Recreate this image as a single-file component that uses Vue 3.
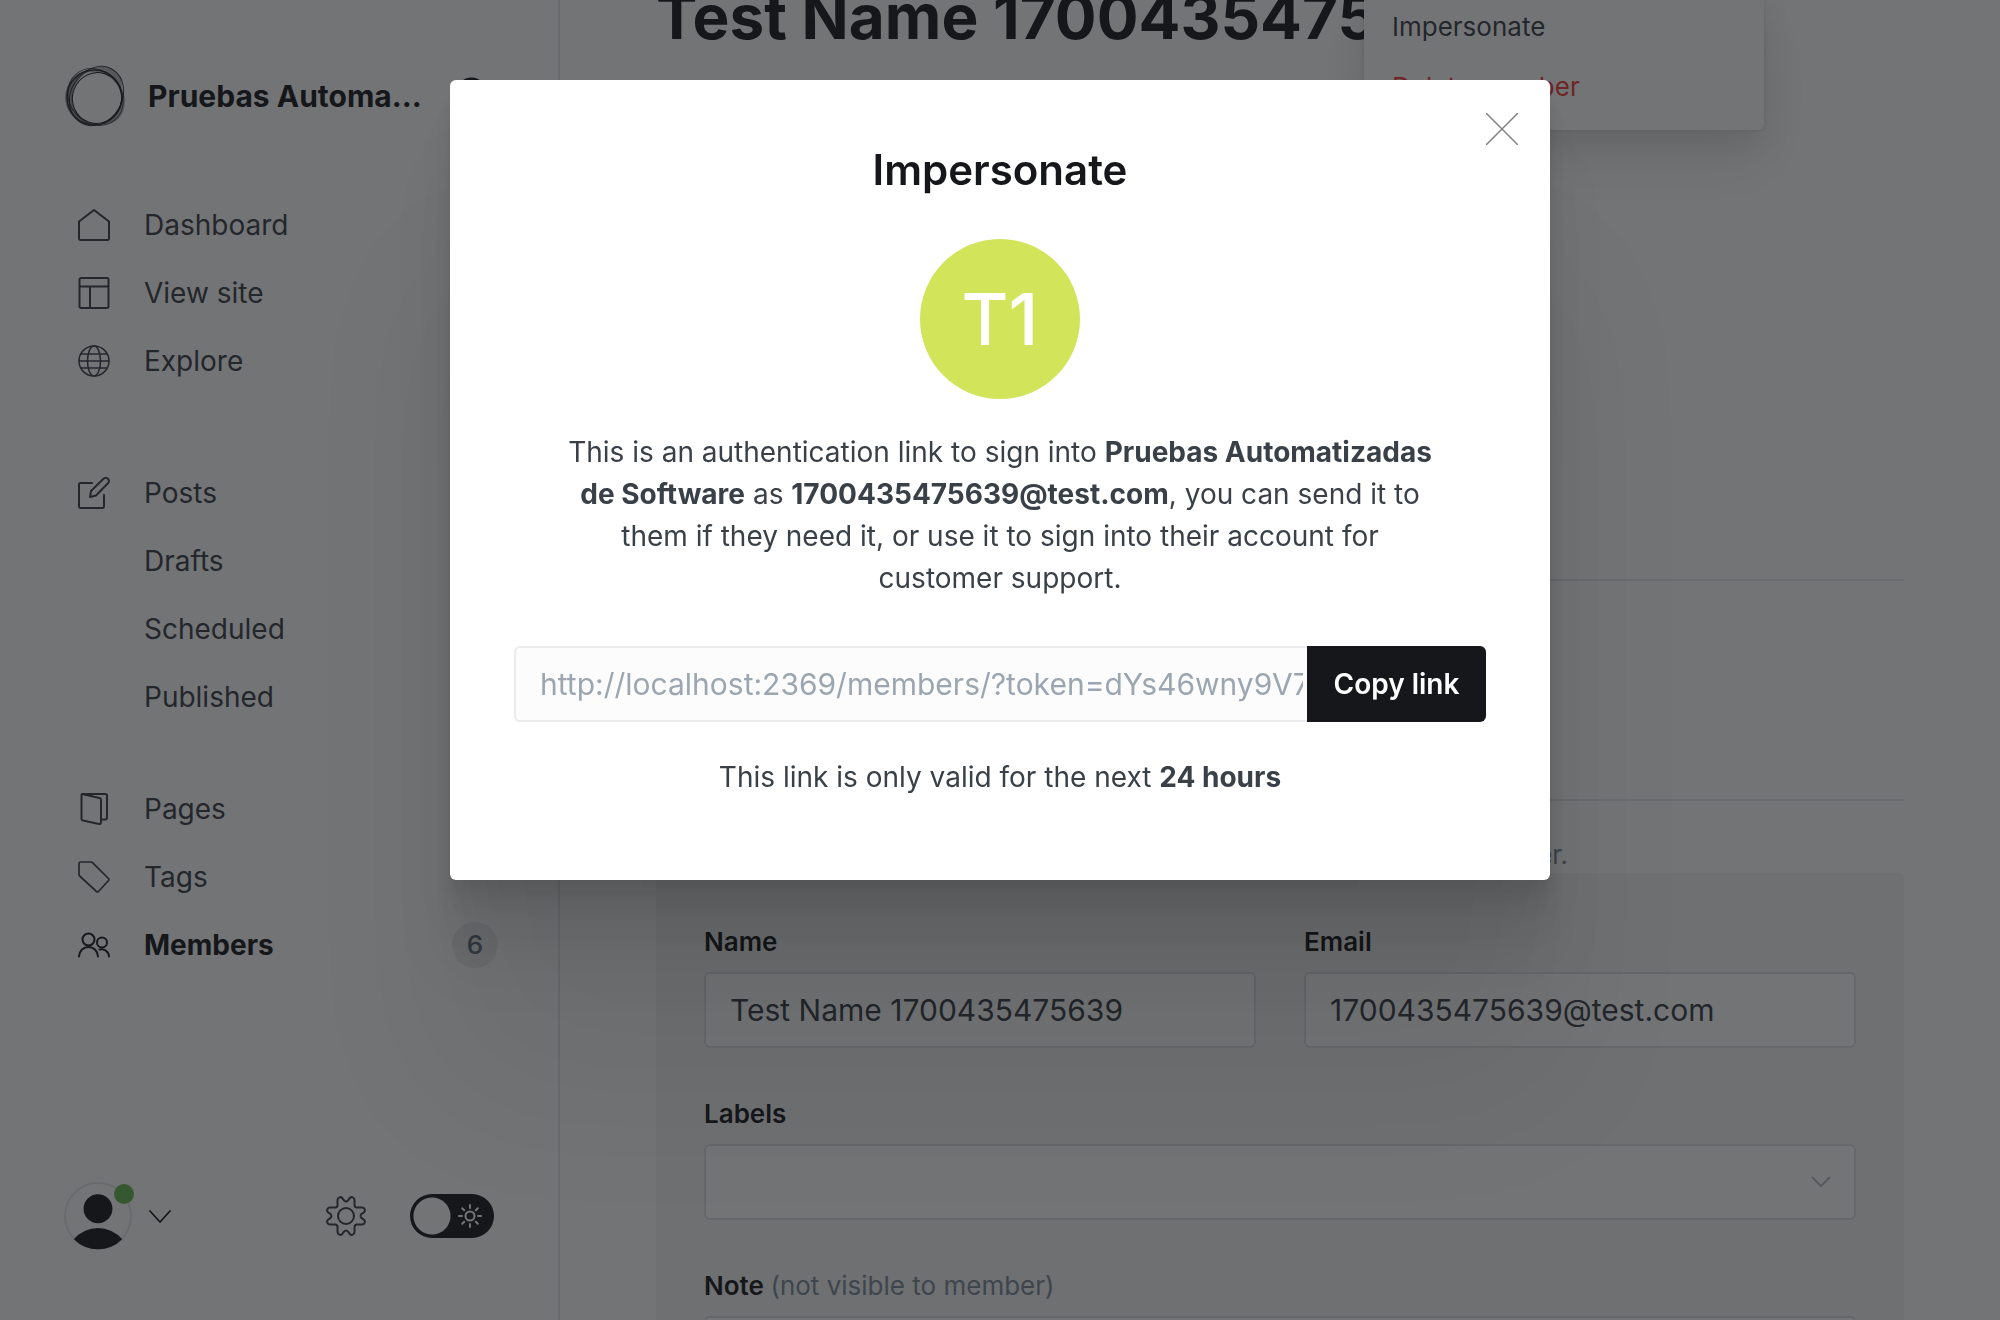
<script setup>
import { ref } from 'vue'

const groups = [
  { id: 'site-links', items: [
    { label: 'Dashboard', icon: 'house' },
    { label: 'View site', icon: 'layout' },
    { label: 'Explore', icon: 'globe' },
  ] },
  { id: 'post-links', items: [
    { label: 'Posts', icon: 'pen' },
    { label: 'Drafts' },
    { label: 'Scheduled' },
    { label: 'Published' },
  ] },
  { id: 'content-links', items: [
    { label: 'Pages', icon: 'pages' },
    { label: 'Tags', icon: 'tag' },
    { label: 'Members', icon: 'members', active: true, count: 6 },
  ] },
]

const name = ref('Test Name 1700435475639')
const email = ref('1700435475639@test.com')
const note = ref('')
const night = ref(false)
const link = 'http://localhost:2369/members/?token=dYs46wny9V7kQx2LrT5'
</script>

<template>
  <div class="page">
    <aside class="sidebar">
      <header class="site">
        <svg class="logo" viewBox="0 0 64 64" fill="none" stroke="#15171a" aria-hidden="true">
          <g fill="#15171a" stroke="none">
            <path opacity=".3" d="M20 9C30 0 46 0 55 11c5 7 2 14 2 20C54 15 38 5 20 9z" />
            <path opacity=".3" d="M58 24c5 10 4 26-6 33c-6 4-12 3-16 3c14-4 24-18 22-36z" />
            <path opacity=".45" d="M28 6C10 6-2 24 2 40c3 12 14 21 28 21C12 56 5 40 9 27C12 16 20 9 28 6z" />
          </g>
          <ellipse cx="33" cy="34" rx="24.500" ry="25.500" transform="rotate(20 33 34)" />
          <ellipse cx="30.500" cy="33.500" rx="27.500" ry="27.500" stroke-width="1.500" opacity=".8" />
          <ellipse cx="31.500" cy="33" rx="30" ry="26" transform="rotate(50 31.500 33)" opacity=".7" />
          <ellipse cx="32.500" cy="32" rx="31" ry="25.500" transform="rotate(-58 32.500 32)" opacity=".8" />
        </svg>
        <span class="site-name">Pruebas Automa...</span>
        <button class="search" type="button" aria-label="Search">
          <svg viewBox="0 0 32 32" fill="none" stroke="#15171a" stroke-width="3"><circle cx="13" cy="13" r="11" /><path d="M21 21l9 9" /></svg>
        </button>
      </header>

      <nav class="nav">
        <ul v-for="group in groups" :key="group.id" :class="['group', group.id]">
          <li v-for="item in group.items" :key="item.label">
            <a href="#" :class="['item', { active: item.active }]">
              <svg class="icon" viewBox="0 0 32 32" fill="none" stroke="currentColor" stroke-width="2" stroke-linecap="round" stroke-linejoin="round" aria-hidden="true">
                <path v-if="item.icon === 'house'" d="M1 12.500L16 1l15 11.500V29.500a1.500 1.500 0 0 1-1.500 1.500h-27A1.500 1.500 0 0 1 1 29.500z" />
                <path v-else-if="item.icon === 'layout'" d="M3 1h26a1.500 1.500 0 0 1 1.500 1.500v27A1.500 1.500 0 0 1 29 31H3a1.500 1.500 0 0 1-1.500-1.500v-27A1.500 1.500 0 0 1 3 1zM1.500 9.500h29M12 9.500V31" />
                <g v-else-if="item.icon === 'globe'" stroke-width="1.500">
                  <circle cx="16" cy="16" r="15" /><ellipse cx="16" cy="16" rx="6.500" ry="15" /><path d="M1 16h30M3 9h26M3 23h26" />
                </g>
                <g v-else-if="item.icon === 'pen'">
                  <path d="M14 6H2.500A1.500 1.500 0 0 0 1 7.500v22A1.500 1.500 0 0 0 2.500 31h22a1.500 1.500 0 0 0 1.500-1.500V18" />
                  <path d="M12 20l1-6L25.500 1.800a3 3 0 0 1 4.500 4.500L18 18.500z" />
                </g>
                <g v-else-if="item.icon === 'pages'">
                  <path d="M4 1h23.500A1.500 1.500 0 0 1 29 2.500V25a1.500 1.500 0 0 1-1.500 1.500H23" />
                  <path d="M4 1l17.500 4A2 2 0 0 1 23 7v22.500a1.500 1.500 0 0 1-2 1.500L5 27.500A2 2 0 0 1 3.500 26V2z" />
                </g>
                <path v-else-if="item.icon === 'tag'" d="M2.500 1H13a2 2 0 0 1 1.500.600L30.500 17.500a1.500 1.500 0 0 1 0 2L20.500 30.500a1.500 1.500 0 0 1-2 0L1.600 15A2 2 0 0 1 1 13.500v-11A1.500 1.500 0 0 1 2.500 1z" stroke-width="1.700" />
                <g v-else-if="item.icon === 'members'">
                  <circle cx="10.500" cy="10.500" r="6" /><path d="M1 27.500a9.500 9.500 0 0 1 19 0" />
                  <circle cx="24" cy="13.500" r="5" /><path d="M21.500 20.500a7.500 7.500 0 0 1 9.500 7" />
                </g>
              </svg>
              <span>{{ item.label }}</span>
              <span v-if="item.count" class="count">{{ item.count }}</span>
            </a>
          </li>
        </ul>
      </nav>

      <footer class="account">
        <button class="user" type="button" aria-label="Account menu">
          <span class="avatar">
            <svg viewBox="0 0 66 66" aria-hidden="true"><circle cx="33" cy="33" r="32" fill="none" stroke="#e5e8ea" stroke-width="2" /><circle cx="33" cy="26" r="14" fill="#15171a" /><path d="M9.500 55.500a31 31 0 0 1 47 0 33 33 0 0 1-47 0z" fill="#15171a" /></svg>
            <span class="dot"></span>
          </span>
          <svg class="caret" viewBox="0 0 22 14" fill="none" stroke="#15171a" stroke-width="1.700" stroke-linecap="round" stroke-linejoin="round" aria-hidden="true"><path d="M1 2l10 11L21 2" /></svg>
        </button>
        <a class="settings" href="#" aria-label="Settings">
          <svg viewBox="0 0 40 40" fill="none" stroke="#394047" stroke-width="2" stroke-linejoin="round">
            <circle cx="20" cy="20" r="8" />
            <path v-for="turn in [0, 90, 180, 270]" :key="turn" :transform="`rotate(${turn} 20 20)`" d="M20 5.500C22 5.500 22.500 3.500 23.800 2C25.500.200 28.500 1.500 28.500 4V9Q28.500 11.500 31 11.500H36C38.500 11.500 39.800 14.500 38 16.200C36.500 17.500 34.500 18 34.500 20" />
          </svg>
        </a>
        <label class="switch">
          <input v-model="night" type="checkbox" aria-label="Night shift">
          <svg viewBox="0 0 24 24" fill="none" stroke="#fff" stroke-width="2" stroke-linecap="round" aria-hidden="true"><circle cx="12" cy="12" r="4.500" /><path d="M12 1v3M12 20v3M1 12h3M20 12h3M4.200 4.200l2 2M17.800 17.800l2 2M4.200 19.800l2-2M17.800 6.200l2-2" /></svg>
        </label>
      </footer>
    </aside>

    <main class="content">
      <h1 class="heading">Test Name 1700435475639</h1>
      <div class="menu" role="menu">
        <button type="button" role="menuitem">Impersonate</button>
        <button class="danger" type="button" role="menuitem">Delete member</button>
      </div>
      <section class="summary"></section>
      <section class="activity"></section>
      <p class="hint">member.</p>
      <form class="card">
        <div class="field">
          <label for="name">Name</label>
          <input id="name" v-model="name" type="text">
        </div>
        <div class="field">
          <label for="email">Email</label>
          <input id="email" v-model="email" type="email">
        </div>
        <div class="field wide">
          <label for="labels">Labels</label>
          <div class="select">
            <select id="labels"><option></option></select>
            <svg viewBox="0 0 20 12" fill="none" stroke="#b4bac0" stroke-width="2" aria-hidden="true"><path d="M1 1l9 9 9-9" /></svg>
          </div>
        </div>
        <div class="field wide">
          <label for="note">Note <span>(not visible to member)</span></label>
          <textarea id="note" v-model="note"></textarea>
        </div>
      </form>
    </main>

    <div class="backdrop">
      <div class="modal" role="dialog" aria-modal="true" aria-labelledby="modal-title">
        <button class="close" type="button" aria-label="Close">
          <svg viewBox="0 0 32 32" fill="none" stroke="#7f8285" stroke-width="1.500"><path d="M0 0l32 32M32 0L0 32" /></svg>
        </button>
        <h2 id="modal-title">Impersonate</h2>
        <div class="initials">T1</div>
        <p class="text">This is an authentication link to sign into <strong>Pruebas Automatizadas de Software</strong> as <strong>1700435475639@test.com</strong>, you can send it to them if they need it, or use it to sign into their account for customer support.</p>
        <div class="copy">
          <input type="text" :value="link" readonly disabled aria-label="Sign-in link">
          <button type="button">Copy link</button>
        </div>
        <p class="text">This link is only valid for the next <strong>24 hours</strong></p>
      </div>
    </div>
  </div>
</template>

<style>
body {
  background: #fff;
}
</style>

<style scoped>
* {
  box-sizing: border-box;
  margin: 0;
}

.page {
  display: flex;
  height: 100vh;
  overflow: hidden;
  font-family: Inter, "Liberation Sans", sans-serif;
  font-size: 28px;
  color: #15171a;
}

button,
input,
select,
textarea {
  font-family: inherit;
  font-size: inherit;
  color: inherit;
}

button {
  padding: 0;
  border: 0;
  background: none;
}

svg {
  display: block;
}

.sidebar {
  display: flex;
  flex: none;
  flex-direction: column;
  width: 560px;
  padding: 64px 64px 70px;
  border-right: 2px solid #e5e8ea;
}

.site {
  display: flex;
  align-items: center;
  height: 64px;
}

.logo {
  width: 64px;
  height: 64px;
  margin-right: 20px;
}

.site-name {
  flex: 1;
  font-size: 30px;
  font-weight: 700;
  white-space: nowrap;
}

.search svg {
  width: 38px;
  height: 38px;
}

.nav {
  margin: 63px -4px 0 0;
}

.group {
  padding: 0;
  list-style: none;
}

.group.post-links {
  margin-top: 64px;
}

.group.content-links {
  margin-top: 44px;
}

.item {
  display: flex;
  align-items: center;
  height: 68px;
  padding: 0 0 0 14px;
  color: #394047;
  text-decoration: none;
}

.item.active {
  color: #15171a;
  font-weight: 700;
}

.icon {
  width: 32px;
  height: 32px;
  margin-right: 34px;
}

.count {
  width: 46px;
  margin-left: auto;
  border-radius: 23px;
  background: #ebeced;
  color: #626d79;
  font-size: 26px;
  font-weight: 500;
  line-height: 46px;
  text-align: center;
}

.account {
  display: flex;
  align-items: center;
  margin-top: auto;
}

.user {
  display: flex;
  align-items: center;
  gap: 17px;
}

.avatar {
  position: relative;
  width: 68px;
  height: 68px;
}

.avatar svg {
  width: 68px;
  height: 68px;
}

.dot {
  position: absolute;
  top: 2px;
  right: -2px;
  width: 20px;
  height: 20px;
  border-radius: 50%;
  background: #66b850;
}

.caret {
  width: 22px;
  height: 14px;
}

.settings {
  margin: 0 44px 0 auto;
}

.settings svg {
  width: 40px;
  height: 40px;
}

.switch {
  position: relative;
}

.switch input {
  display: block;
  width: 84px;
  height: 44px;
  margin: 0;
  border-radius: 22px;
  background: radial-gradient(circle at 22px 22px, #fff 18px, #15171a 19px);
  appearance: none;
}

.switch svg {
  position: absolute;
  top: 10px;
  right: 12px;
  width: 24px;
  height: 24px;
}

.content {
  position: relative;
  flex: 1;
  min-width: 0;
  padding: 0 96px;
}

.heading {
  font-size: 62px;
  font-weight: 700;
  line-height: 34px;
  white-space: nowrap;
}

.menu {
  position: absolute;
  top: -10px;
  right: 236px;
  display: flex;
  flex-direction: column;
  width: 400px;
  padding: 6px 0 14px;
  border-radius: 6px;
  background: #fff;
  box-shadow: 0 0 4px rgba(0, 0, 0, .12), 0 16px 32px rgba(0, 0, 0, .08), 0 32px 60px rgba(0, 0, 0, .08);
}

.menu button {
  height: 60px;
  padding: 0 28px;
  color: #394047;
  font-size: 26px;
  text-align: left;
}

.menu .danger {
  color: #f03a35;
}

.summary {
  height: 547px;
  border-bottom: 2px solid #e6e8ea;
}

.activity {
  height: 220px;
  border-bottom: 2px solid #e6e8ea;
}

.hint {
  padding: 36px 336px 0 0;
  color: #7c8b9a;
  font-size: 26px;
  line-height: 36px;
  text-align: right;
}

.card {
  display: grid;
  grid-template-columns: 1fr 1fr;
  gap: 49px 48px;
  padding: 52px 48px;
  border-radius: 6px;
  background: #f3f4f4;
}

.field {
  display: flex;
  flex-direction: column;
  gap: 13px;
}

.wide {
  grid-column: 1 / -1;
}

.field label {
  font-size: 26px;
  font-weight: 600;
  line-height: 34px;
}

.field label span {
  color: #7c8b9a;
  font-weight: 400;
}

.field input,
.field select,
.field textarea {
  width: 100%;
  height: 76px;
  padding: 0 24px;
  border: 2px solid #dddfe1;
  border-radius: 6px;
  background: #fff;
  color: #394047;
  font-size: 30px;
}

.field select {
  display: block;
  appearance: none;
}

.field textarea {
  display: block;
  height: 160px;
}

.select {
  position: relative;
}

.select svg {
  position: absolute;
  top: 32px;
  right: 25px;
  width: 20px;
  height: 12px;
}

.backdrop {
  position: fixed;
  inset: 0;
  display: flex;
  align-items: flex-start;
  justify-content: center;
  padding-top: 80px;
  background: rgba(21, 23, 26, .6);
}

.modal {
  position: relative;
  display: flex;
  flex-direction: column;
  align-items: center;
  width: 1100px;
  padding: 64px 64px 82px;
  border-radius: 6px;
  background: #fff;
  box-shadow: 0 6px 4px rgba(0, 0, 0, .02), 0 13px 11px rgba(0, 0, 0, .03), 0 25px 20px rgba(0, 0, 0, .04), 0 45px 36px rgba(0, 0, 0, .05), 0 84px 67px rgba(0, 0, 0, .06), 0 200px 160px rgba(0, 0, 0, .07);
}

.close {
  position: absolute;
  top: 33px;
  right: 32px;
}

.close svg {
  width: 32px;
  height: 32px;
}

.modal h2 {
  font-size: 42px;
  font-weight: 600;
  line-height: 52px;
}

.initials {
  width: 160px;
  margin: 43px 0 32px;
  border-radius: 50%;
  background: #d2e459;
  color: #fff;
  font-size: 72px;
  font-weight: 500;
  line-height: 160px;
  text-align: center;
}

.text {
  max-width: 880px;
  color: #394047;
  line-height: 42px;
  text-align: center;
}

.copy {
  display: flex;
  width: 100%;
  margin: 47px 0 34px;
}

.copy input {
  flex: 1;
  min-width: 0;
  height: 76px;
  padding: 0 4px 0 24px;
  border: 2px solid #ebeced;
  border-right: 0;
  border-radius: 6px 0 0 6px;
  background: #fcfcfc;
  color: #9ba6b1;
  font-size: 30px;
}

.copy button {
  width: 179px;
  border-radius: 0 6px 6px 0;
  background: #15171a;
  color: #fff;
  font-weight: 600;
}
</style>
